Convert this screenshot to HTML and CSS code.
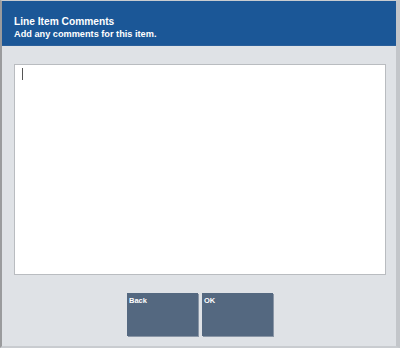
FILE: index.html
```html
<!DOCTYPE html>
<html>
<head>
<meta charset="utf-8">
<link rel="stylesheet" href="styles.css">
</head>
<body>
<div class="frame">
  <div class="header">
    <div class="title">Line Item Comments</div>
    <div class="subtitle">Add any comments for this item.</div>
  </div>
  <div class="content">
    <div class="textbox"><span class="caret"></span></div>
    <div class="buttons">
      <div class="btn">Back</div>
      <div class="btn">OK</div>
    </div>
  </div>
</div>
</body>
</html>
```
FILE: styles.css
```css
html, body {
  margin: 0;
  padding: 0;
  width: 400px;
  height: 348px;
  overflow: hidden;
  background: #dfe2e6;
  font-family: "Liberation Sans", Arial, sans-serif;
}
.frame {
  box-sizing: border-box;
  width: 400px;
  height: 348px;
  border-top: 1px solid #c9ccd0;
  border-left: 2px solid #9a9b9d;
  border-right: 4px solid #c3c6ca;
  border-bottom: 2px solid #c9ccd0;
  display: flex;
  flex-direction: column;
}
.header {
  background: #1b5797;
  height: 45px;
  border-bottom: 1px solid #2a5f9a;
  padding: 15px 0 0 12px;
  box-sizing: border-box;
  color: #fff;
  font-weight: bold;
}
.title {
  font-size: 10.2px;
  line-height: 12px;
}
.subtitle {
  font-size: 9.2px;
  line-height: 12px;
}
.content {
  flex: 1;
  display: flex;
  flex-direction: column;
  padding: 18px 10px 0 12px;
}
.textbox {
  height: 209px;
  background: #fff;
  border: 1px solid #b9bcc0;
  position: relative;
}
.caret {
  position: absolute;
  left: 7px;
  top: 3px;
  width: 1px;
  height: 12px;
  background: #555;
}
.buttons {
  display: flex;
  justify-content: center;
  gap: 4px;
  margin-top: 18px;
}
.btn {
  width: 71px;
  height: 43px;
  background: #546880;
  box-shadow: 1px 1px 0 #8a96a6;
  color: #fff;
  font-size: 7.5px;
  font-weight: bold;
  padding: 3px 0 0 2px;
  box-sizing: border-box;
}
```
